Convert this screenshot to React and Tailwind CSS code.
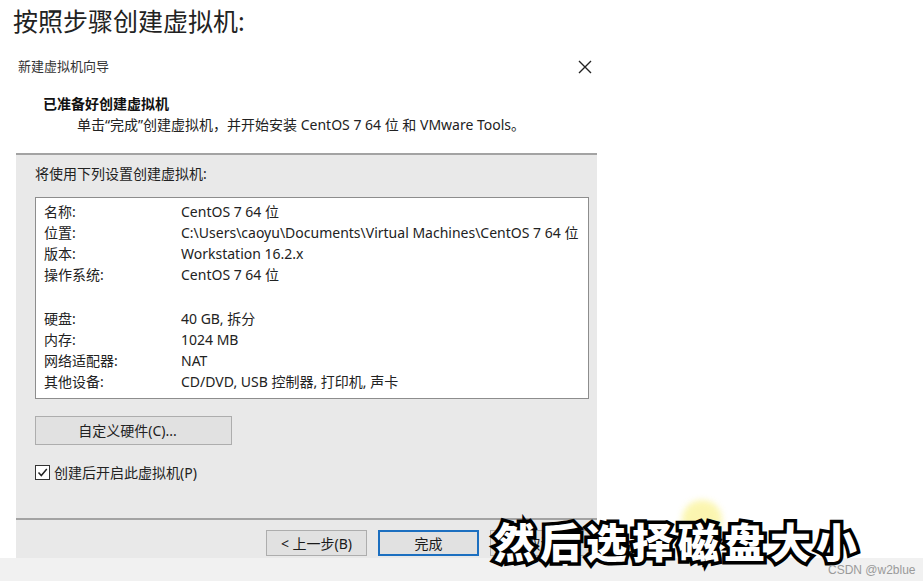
import React from 'react';

const font = { fontFamily: '"Noto Sans", "Noto Sans CJK SC", sans-serif' };

const rows = [
    ['名称:', 'CentOS 7 64 位'],
    ['位置:', 'C:\\Users\\caoyu\\Documents\\Virtual Machines\\CentOS 7 64 位'],
    ['版本:', 'Workstation 16.2.x'],
    ['操作系统:', 'CentOS 7 64 位'],
    null,
    ['硬盘:', '40 GB, 拆分'],
    ['内存:', '1024 MB'],
    ['网络适配器:', 'NAT'],
    ['其他设备:', 'CD/DVD, USB 控制器, 打印机, 声卡'],
];

const WizardButton = ({ children, primary }) => (
    <div
        className={`w-[101px] h-[26px] flex items-center justify-center text-[14px] text-[#1a1a1a] bg-[#e1e1e1] ${
            primary ? 'border-2 border-[#1c6fc0]' : 'border border-[#adadad]'
        }`}
    >
        {children}
    </div>
);

const App = () => {
    return (
        <div className="relative w-[923px] h-[581px] overflow-hidden bg-white text-[#111]" style={font}>
            <h1 className="pl-[13px] pt-[6px] h-[50px] text-[25px] leading-[30px] font-normal text-[#222]">按照步骤创建虚拟机:</h1>

            <div className="ml-[16px] w-[581px] flex flex-col">
                {/* header */}
                <div className="bg-white h-[103px] relative">
                    <div className="flex items-center justify-between pl-[2px] pr-[4px] h-[34px]">
                        <span className="text-[13px] text-[#333]">新建虚拟机向导</span>
                        <svg width="14" height="14" viewBox="0 0 14 14" className="mr-[1px]">
                            <path d="M1 1 L13 13 M13 1 L1 13" stroke="#222" strokeWidth="1.4" />
                        </svg>
                    </div>
                    <div className="pl-[27px] pt-[9px] text-[14px] font-bold leading-[22px]">已准备好创建虚拟机</div>
                    <div className="pl-[61px] text-[14px] leading-[20px] text-[#222]">
                        单击“完成”创建虚拟机，并开始安装 CentOS 7 64 位 和 VMware Tools。
                    </div>
                </div>

                {/* body */}
                <div className="bg-[#e9e9e9] border-t-2 border-[#a3a3a3] h-[365px] pl-[19px] pr-[8px] flex flex-col">
                    <div className="pt-[8px] h-[42px] text-[14px] leading-[22px] text-[#222]">将使用下列设置创建虚拟机:</div>
                    <div className="w-[554px] h-[202px] bg-white border border-[#8d8d8d] pl-[8px] pt-[3px]">
                        {rows.map((r, i) =>
                            r ? (
                                <div key={i} className="flex h-[21px] items-center text-[14px] text-[#222]">
                                    <span className="w-[137px] shrink-0">{r[0]}</span>
                                    <span className="whitespace-nowrap">{r[1]}</span>
                                </div>
                            ) : (
                                <div key={i} className="h-[23px]" />
                            )
                        )}
                    </div>
                    <div className="mt-[17px] w-[197px] h-[29px] bg-[#e1e1e1] border border-[#adadad] flex items-center justify-center pr-[12px] text-[14px] text-[#222]">
                        自定义硬件(C)...
                    </div>
                    <label className="mt-[17px] flex items-center gap-[4px] text-[14px] text-[#222]">
                        <span className="w-[15px] h-[15px] border border-[#333] bg-white flex items-center justify-center">
                            <svg width="11" height="11" viewBox="0 0 11 11">
                                <path d="M1.5 5.5 L4.3 8.5 L9.8 2" stroke="#222" strokeWidth="1.5" fill="none" />
                            </svg>
                        </span>
                        创建后开启此虚拟机(P)
                    </label>
                </div>

                {/* footer */}
                <div className="bg-[#e9e9e9] border-t-2 border-[#a3a3a3] h-[40px] flex items-start justify-end gap-[11px] pt-[10px] pr-[6px]">
                    <WizardButton>&lt; 上一步(B)</WizardButton>
                    <WizardButton primary>完成</WizardButton>
                    <WizardButton>取消</WizardButton>
                </div>
            </div>
            <div className="h-[23px] bg-[#f1f1f1]" />

            {/* cursor highlight */}
            <div className="absolute left-[682px] top-[500px] w-[40px] h-[40px] rounded-full bg-[#fbf5a8] blur-[3px] opacity-90" />

            {/* subtitle */}
            <div
                className="absolute left-[494px] top-[520px] text-[41px] leading-[40px] font-black text-white tracking-[5px] [paint-order:stroke_fill] [-webkit-text-stroke:7px_#000]"
                style={{ fontFamily: '"Noto Sans CJK SC", sans-serif' }}
            >
                然后选择磁盘大小
            </div>

            <div
                className="absolute left-[828px] top-[563px] text-[12px] leading-[14px] text-[#9a9a9a]"
                style={{ fontFamily: '"Liberation Sans", sans-serif' }}
            >
                CSDN @w2blue
            </div>
        </div>
    );
};

export default App;
